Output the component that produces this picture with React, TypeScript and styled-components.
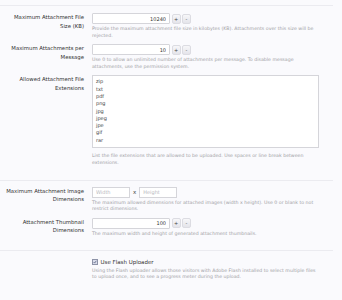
import React from 'react';
import styled, { createGlobalStyle } from 'styled-components';

const GlobalStyle = createGlobalStyle`
  html, body {
    margin: 0;
    padding: 0;
    background: #fafafd;
  }
  body {
    font-family: "DejaVu Sans", Verdana, sans-serif;
  }
`;

const EXTENSIONS = ['zip', 'txt', 'pdf', 'png', 'jpg', 'jpeg', 'jpe', 'gif', 'rar'];

const SpinBox = ({ value }: { value: string }) => (
  <SpinRow>
    <NumberInput defaultValue={value} />
    <SpinButton type="button">+</SpinButton>
    <SpinButton type="button">-</SpinButton>
  </SpinRow>
);

const App = () => (
  <Page>
    <GlobalStyle />
    <Group>
      <Row>
        <Label>Maximum Attachment File Size (KB)</Label>
        <Control>
          <SpinBox value="10240" />
          <Hint>
            Provide the maximum attachment file size in kilobytes (KB). Attachments over this size will be
            rejected.
          </Hint>
        </Control>
      </Row>
      <Row>
        <Label>Maximum Attachments per Message</Label>
        <Control>
          <SpinBox value="10" />
          <Hint>
            Use 0 to allow an unlimited number of attachments per message. To disable message
            attachments, use the permission system.
          </Hint>
        </Control>
      </Row>
      <Row>
        <Label>Allowed Attachment File Extensions</Label>
        <Control>
          <TextArea defaultValue={EXTENSIONS.join('\n')} />
          <Hint $gap={5}>
            List the file extensions that are allowed to be uploaded. Use spaces or line break between
            extensions.
          </Hint>
        </Control>
      </Row>
    </Group>

    <Group>
      <Row>
        <Label>Maximum Attachment Image Dimensions</Label>
        <Control>
          <SizeRow>
            <SizeInput placeholder="Width" />
            <Times>x</Times>
            <SizeInput placeholder="Height" />
          </SizeRow>
          <Hint>
            The maximum allowed dimensions for attached images (width x height). Use 0 or blank to not
            restrict dimensions.
          </Hint>
        </Control>
      </Row>
      <Row>
        <Label>Attachment Thumbnail Dimensions</Label>
        <Control>
          <SpinBox value="100" />
          <Hint>The maximum width and height of generated attachment thumbnails.</Hint>
        </Control>
      </Row>
    </Group>

    <Group>
      <Row>
        <Label />
        <Control>
          <CheckLabel>
            <CheckBox>
              <svg width="6" height="6" viewBox="0 0 6 6">
                <path d="M1 3.2 L2.4 4.6 L5 1.2" fill="none" stroke="#3d4a6b" strokeWidth="1" />
              </svg>
            </CheckBox>
            Use Flash Uploader
          </CheckLabel>
          <Hint>
            Using the Flash uploader allows those visitors with Adobe Flash installed to select multiple files
            to upload once, and to see a progress meter during the upload.
          </Hint>
        </Control>
      </Row>
    </Group>
  </Page>
);

export default App;

const Page = styled.div`
  width: 342px;
  height: 300px;
  overflow: hidden;
  padding-top: 5px;
  box-sizing: border-box;
`;

const Group = styled.div`
  display: flex;
  flex-direction: column;
  gap: 5px;
  margin-right: 9px;
  padding: 7px 0 13px;
  border-top: 1px solid #ebebf0;

  & + & {
    padding-top: 6px;
  }
`;

const Row = styled.div`
  display: grid;
  grid-template-columns: 84px 227px;
  column-gap: 8px;
  align-items: start;
`;

const Label = styled.div`
  text-align: right;
  font-size: 5.35px;
  line-height: 8.5px;
  color: #333;
  padding-left: 6px;
`;

const Control = styled.div`
  display: flex;
  flex-direction: column;
`;

const Hint = styled.div<{ $gap?: number }>`
  margin-top: ${({ $gap }) => $gap ?? 2}px;
  font-size: 4.7px;
  line-height: 6.6px;
  color: #a0a0a4;
`;

const SpinRow = styled.div`
  display: flex;
  align-items: center;
  gap: 1.5px;
`;

const NumberInput = styled.input`
  width: 78px;
  height: 11px;
  box-sizing: border-box;
  border: 1px solid #d5d5da;
  border-radius: 1px;
  background: #fff;
  padding: 0 3px;
  font-family: "DejaVu Sans", Verdana, sans-serif;
  font-size: 5px;
  color: #333;
  text-align: right;
  outline: none;
`;

const SpinButton = styled.button`
  width: 9px;
  height: 10px;
  padding: 0;
  box-sizing: border-box;
  border: 1px solid #dcdce2;
  border-radius: 2px;
  background: linear-gradient(#f7f7f9, #e4e4ea);
  font-family: "DejaVu Sans", Verdana, sans-serif;
  font-size: 5px;
  line-height: 8px;
  color: #444;
`;

const TextArea = styled.textarea`
  width: 227px;
  height: 73px;
  box-sizing: border-box;
  border: 1px solid #d5d5da;
  background: #fff;
  padding: 2px 3px;
  resize: none;
  font-family: "DejaVu Sans", Verdana, sans-serif;
  font-size: 5px;
  line-height: 7.3px;
  color: #444;
  outline: none;
`;

const SizeRow = styled.div`
  display: flex;
  align-items: center;
  gap: 3px;
`;

const SizeInput = styled.input`
  width: 38px;
  height: 11px;
  box-sizing: border-box;
  border: 1px solid #d5d5da;
  background: #fff;
  padding: 0 3px;
  font-family: "DejaVu Sans", Verdana, sans-serif;
  font-size: 5px;
  color: #333;
  outline: none;

  &::placeholder {
    color: #b8b8c0;
  }
`;

const Times = styled.span`
  font-size: 5.5px;
  color: #444;
`;

const CheckLabel = styled.label`
  display: flex;
  align-items: center;
  gap: 2.5px;
  height: 8.5px;
  font-size: 5.5px;
  color: #333;
`;

const CheckBox = styled.span`
  display: inline-flex;
  align-items: center;
  justify-content: center;
  width: 6px;
  height: 6px;
  box-sizing: border-box;
  border: 0.5px solid #8d93a8;
  background: #d9dcea;
`;
